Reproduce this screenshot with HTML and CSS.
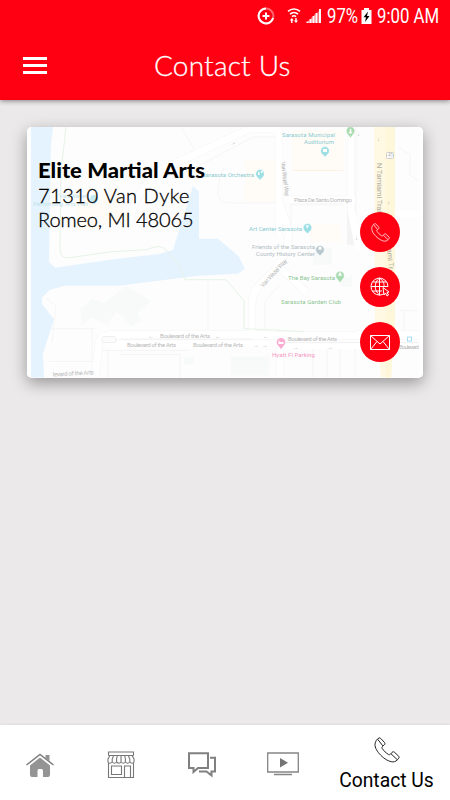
FILE: index.html
```
<!DOCTYPE html>
<html lang="en">
<head>
    <meta charset="UTF-8">
    <meta name="viewport" content="width=device-width, initial-scale=1.0">
    <title>Contact Us</title>
    <link rel="stylesheet" href="styles.css">
</head>
<body>
    <!-- shared icons -->
    <svg class="defs" width="0" height="0">
        <symbol id="phone" viewBox="0 0 26 26">
            <path d="M1 7.2C1.2 4.5 3 2 5 1C5.6.7 6.2.9 6.7 1.4L10.5 5.5C11.2 6.4 11 7.3 10.2 8L8.4 9.5C7.7 10.2 7.8 10.9 8.3 11.6C10 14 12 16 14.4 17.4C15.1 17.9 15.8 17.9 16.4 17.2L18 15.4C18.8 14.6 19.7 14.6 20.5 15.3L24.7 19.2C25.3 19.9 25.2 20.5 24.7 21.2C23.2 23.4 21.2 25 18.8 24.9C15 24.7 10.3 21.9 6.8 18.3C3.3 14.7.8 10.9 1 7.2ZM3.6 2.2L8.8 8.8M16.9 16.7L23.4 22.8"/>
        </symbol>
    </svg>

    <div class="status-bar">
        <svg class="ring" width="18" height="18" viewBox="0 0 18 18">
            <circle cx="9" cy="9" r="7.4" opacity=".4"/>
            <path d="M9 1.6A7.4 7.4 0 1 0 16.1 11M5.5 9h7M9 5.5v7"/>
        </svg>
        <svg class="wifi" width="14" height="18" viewBox="0 0 14 18">
            <path d="M1 4.3C4.5 1.2 9.5 1.2 13 4.3M3 7.2C5.3 5.1 8.7 5.1 11 7.2M5 9.6C6.2 8.6 7.8 8.6 9 9.6"/>
            <path class="fill" d="M4.8 11l2 2.5H5.5V16H4.1v-2.500H2.800zM9 16l-2-2.500h1.300V11h1.400v2.500H11z"/>
        </svg>
        <svg class="signal" width="16" height="16" viewBox="0 0 16 16">
            <path d="M1.500 15v-1.500M4.500 15v-4M7.500 15V8M10.500 15V5M14 15V1"/>
            <path opacity=".45" d="M3 15v-2.500M6 15v-5.500M9 15V6.500M12.500 15V3.500"/>
        </svg>
        <span class="percent">97%</span>
        <svg class="battery" width="11" height="16" viewBox="0 0 11 16">
            <path fill="#fff" d="M3 0h5v2h2.500v14H.5V2H3z"/>
            <path fill="#000" d="M7 3.500L2.500 9.300H5L4 14l4.500-6H6z"/>
        </svg>
        <span class="clock">9:00 AM</span>
    </div>

    <header class="header">
        <button class="menu" aria-label="Menu"><i></i><i></i><i></i></button>
        <h1>Contact Us</h1>
    </header>

    <main class="content">
        <section class="card">
            <svg class="map" viewBox="27 127 396 251" preserveAspectRatio="none">
                <rect x="27" y="127" width="396" height="251" fill="#fdfdfd"/>
                <!-- water -->
                <path fill="#e5f3ff" d="M31 127H53L51 145L49 262L55 268L110 260L160 254L173 250L193 186L199 192V239H218L231 250L239 257L245 269L238 274L199 276L150 282L120 286H65L50 290L42 298V304L54 320L43 354L44 378H31Z"/>
                <!-- blocks and buildings -->
                <path fill="#fffcf7" d="M245 160h32v43h-32zM292 130h52v41h-52zM77 202l40-15 10 35-50 9zM310 225h31v17h-31z"/>
                <path fill="#f8f9f9" d="M80 309l12-10 12 4 22-17 25 15-13 12 3 8-9 6-15-15-10 13-16-7-9 8zM341 279l11-4v12h-11zM184 358h10v7h-10zM231 357h38v19h-38zM313 248h19v17h-19z"/>
                <!-- small streets -->
                <g fill="none" stroke="#f5f5f5" stroke-width="1">
                    <path d="M181 127l18 30M180 176l73-39h24M224 168c-9 22-8 35 4 35h49M46 298l10 8-4 36M51 329h44M92 329v33H49M208 281v49M265 330v-28l14-16M101 351h88M108 351v27M291 248v-43h52M356 127v90M395 215h24M398 147l12 8v20l9 6M400 311h19M404 311v20M313 348v30M327 348v30M340 348v30M355 348v30M120 355h60v24"/>
                    <path stroke="#fbf0e2" d="M292 170.500h51"/>
                </g>
                <!-- roads -->
                <g fill="none" stroke="#f4f4f4" stroke-width="8">
                    <path d="M132 222q-3-13 10-31L157 172L249 129H279V235M351 127V245M288 200h67M355 335H419M101 336h318M95 378l4-34q1-9 12-9h164M252 334v-31q1-14 14-24q23-20 23-48l-10-30M280 348v30M280 268l27 25"/>
                </g>
                <g fill="none" stroke="#fff" stroke-width="7">
                    <path d="M132 222q-3-13 10-31L157 172L249 129H279V235M351 127V210l8 40M288 200h67M355 335H419M101 336h318M95 378l4-34q1-9 12-9h164M252 334v-31q1-14 14-24q23-20 23-48l-10-30M280 348v30M280 268l27 25"/>
                    <path d="M105 344.500H270M279 346h140M395 215h24"/>
                </g>
                <rect x="102" y="337" width="14" height="6" rx="2" fill="#fcfcfc" stroke="#eee"/>
                <path fill="none" stroke="#f1f1f1" d="M121 339.500h131M284 343h135"/>
                <path fill="none" stroke="#e5f3e7" d="M66 127l-5 45l-1 78q1 9 9 8l42-6 36-2q13-7 20 1l12 14 6 15h41l18 21v28l60 3"/>
                <!-- highway -->
                <path fill="#fff9e3" d="M374 127h21v195l-4 56h-10l-6-56z"/>
                <path fill="#fff7da" d="M385.500 127h9.500v195l-4 56h-5.500z"/>
                <rect x="386.500" y="152.500" width="7" height="6" rx="1" fill="#fff" stroke="#ccc"/>
                <text x="388" y="157.500" font-size="4.500" fill="#aaa">41</text>

                <g class="label teal">
                    <text x="282" y="137" textLength="53">Sarasota Municipal</text>
                    <text x="304" y="144" textLength="30">Auditorium</text>
                    <text x="202" y="177" textLength="52">Sarasota Orchestra</text>
                    <text x="249" y="231" textLength="53">Art Center Sarasota</text>
                    <text class="faded" x="59" y="198" textLength="28">Van Wezel</text>
                    <text class="faded" x="33" y="206" textLength="55">Performing Arts Hall</text>
                </g>
                <g class="label gray">
                    <text x="294" y="202" textLength="58">Plaza De Santo Domingo</text>
                    <g class="slate">
                        <text x="252" y="249" textLength="63">Friends of the Sarasota</text>
                        <text x="256" y="256" textLength="59">County History Center</text>
                    </g>
                    <text x="127" y="347" textLength="49">Boulevard of the Arts</text>
                    <text x="160" y="338" textLength="50">Boulevard of the Arts</text>
                    <text x="193" y="347" textLength="50">Boulevard of the Arts</text>
                    <text x="288" y="341" textLength="49">Boulevard of the Arts</text>
                    <text x="53" y="377" textLength="41" transform="rotate(-3 53 377)">levard of the Arts</text>
                    <text x="399" y="349" textLength="20">Boulevard</text>
                    <text textLength="35" transform="translate(281 162) rotate(83)">Van Wezel Way</text>
                    <text textLength="36" transform="translate(263 288) rotate(-47)">Van Wezel Way</text>
                    <text class="trail" textLength="51" transform="translate(377 163) rotate(90)">N Tamiami Trail</text>
                    <text class="trail" transform="translate(387 249) rotate(85)">ami Tr</text>
                    <text x="148" y="338">←</text>
                    <text x="215" y="338">←</text>
                    <text x="263" y="338">←</text>
                    <text x="253" y="347">→</text>
                    <text x="262" y="347">→</text>
                    <text x="293" y="349">→</text>
                    <text x="327" y="349">→</text>
                    <text x="377" y="141">↓</text>
                    <text x="357" y="136">↓</text>
                    <text x="387" y="205">↑</text>
                    <text x="355" y="240">↓</text>
                    <text transform="translate(231 146) rotate(-28)">→</text>
                </g>
                <g class="label green">
                    <text x="288" y="280" textLength="47">The Bay Sarasota</text>
                    <text x="281" y="304" textLength="60">Sarasota Garden Club</text>
                </g>
                <text class="label pink" x="272" y="357" textLength="43">Hyatt Fl Parking</text>

                <!-- pins -->
                <g stroke="#fff" stroke-width=".5">
                    <path fill="#9ddfe5" d="M260 180l-3-3a4.300 4.300 0 1 1 6 0zM325 157l-3-3a4.300 4.300 0 1 1 6 0zM307.500 234l-3-3a4.300 4.300 0 1 1 6 0z"/>
                    <path fill="#c4e9f2" d="M94 205l-3-3a4.300 4.300 0 1 1 6 0z"/>
                    <path fill="#a9dbb0" d="M350.500 138l-3-4a4.300 4.300 0 1 1 6 0zM340 283l-3-4a4.300 4.300 0 1 1 6 0z"/>
                    <path fill="#b8c8cf" d="M320 256l-3-3a4.300 4.300 0 1 1 6 0z"/>
                    <path fill="#f9abd0" d="M281 350l-3-4a4.500 4.500 0 1 1 6 0z"/>
                </g>
                <g fill="#fff">
                    <path d="M258 172h1.500v3H258zM261 171h1.500v2H261zM323 149h4v3h-4zM306 225l3 1-2 3zM349.800 129h1.500v3h1.500l-2.300 2-2.300-2h1.600zM340 272l2 4h-4zM318.500 247h3v3h-3zM278.500 341h1v1.500h4v2h-5z"/>
                </g>
                <rect x="407.500" y="337.500" width="4" height="4" fill="#fff" stroke="#a8def5"/>
                <path fill="#fff" d="M27 127h4v251h-4zM419.500 127h4v251h-4z"/>
            </svg>

            <div class="address">
                <strong>Elite Martial Arts</strong>
                <span class="street">71310 Van Dyke</span>
                <span class="city">Romeo, MI 48065</span>
            </div>

            <div class="actions">
                <a class="round" href="#" aria-label="Call">
                    <svg width="19" height="19"><use href="#phone"/></svg>
                </a>
                <a class="round" href="#" aria-label="Website">
                    <svg width="20" height="20" viewBox="0 0 20 20">
                        <path d="M13.500 17.100A8.500 8.500 0 1 1 18 9.500M9.500 1v17M1 9.500H18M2.500 5h14M2.500 14H12M9.500 1C3.800 5.500 3.800 13.500 9.500 18M9.500 1C13.500 3.800 14.300 6.800 14 10"/>
                        <path d="M13 10.500L14 18L15.500 16L17 19L18.500 18L17 15.500L19 15Z"/>
                    </svg>
                </a>
                <a class="round" href="#" aria-label="Email">
                    <svg width="20" height="15" viewBox="0 0 20 15">
                        <path d="M.5.500H19.500V14.500H.5ZM.5.500L10 9L19.500.500M.5 14.500L7 6.500M19.500 14.500L13 6.500"/>
                    </svg>
                </a>
            </div>
        </section>
    </main>

    <nav class="tabs">
        <a class="tab" href="#" aria-label="Home">
            <svg width="30" height="26" viewBox="0 0 30 26">
                <path fill="#949494" d="M5 13.500L15 5.500L25 13.500V23Q25 25 23 25H18V19Q18 17 16.500 17H14Q12.500 17 12.500 19V25H7Q5 25 5 23ZM20.500 3H24.500V9L20.500 6Z"/>
                <path fill="none" stroke="#808080" stroke-width="1.500" d="M1.500 13L15 2.500L28.500 13"/>
            </svg>
        </a>
        <a class="tab" href="#" aria-label="Store">
            <svg class="line" width="28" height="28" viewBox="0 0 28 28">
                <path d="M1.500 4.500V1H26.500V4.500M1.500 4.500H26.500M3 4.500L1 8V11Q3 13.500 5.200 11Q7.500 13.500 9.600 11Q12 13.500 14 11Q16.200 13.500 18.400 11Q20.600 13.500 22.800 11Q25 13.500 27 11V8L25 4.500M5.200 11V8L6.500 5M9.600 11V8L10.200 5M14 11V5M18.400 11V8L17.800 5M22.800 11V8L21.500 5M1.500 12V26.500H26.500V12M4.500 15H14.500V23.500H4.500ZM17.500 26V15H23.500V26"/>
            </svg>
        </a>
        <a class="tab" href="#" aria-label="Messages">
            <svg class="chat" width="30" height="28" viewBox="0 0 30 28">
                <path d="M2 2.200H21V17H11L6.500 21V17H2ZM23 6.800H28V20.500H24.500V24.500L19.500 20.500H12"/>
            </svg>
        </a>
        <a class="tab videos" href="#" aria-label="Videos">
            <svg width="32" height="24" viewBox="0 0 32 24">
                <path fill="none" stroke="#858585" stroke-width="1.300" d="M.7 1H31.300V20H.7ZM7 22.500H25"/>
                <path fill="#757575" d="M13 6V15.500L21 10.700Z"/>
            </svg>
        </a>
        <a class="tab active" href="#">
            <svg width="26" height="26"><use href="#phone"/></svg>
            <span>Contact Us</span>
        </a>
    </nav>
</body>
</html>
```
FILE: styles.css
```
* {
    box-sizing: border-box;
}

body {
    margin: 0;
    height: 800px;
    display: flex;
    flex-direction: column;
    background-color: #ebe9ea;
    font-family: Lato, sans-serif;
    overflow: hidden;
}

.defs {
    position: absolute;
}

a {
    color: inherit;
    text-decoration: none;
}

/* status bar */
.status-bar {
    height: 32px;
    flex: none;
    display: flex;
    align-items: center;
    justify-content: flex-end;
    padding-right: 12px;
    background-color: #ff0012;
    color: #fff;
    font-family: Roboto, sans-serif;
    font-size: 19.5px;
    line-height: 32px;
    position: relative;
    z-index: 2;
}

.status-bar svg {
    flex: none;
    fill: none;
    stroke: #fff;
    stroke-width: 1.6;
}

.status-bar .ring {
    stroke-width: 2;
    margin-right: 12px;
}

.status-bar .wifi {
    margin-right: 5px;
}

.status-bar .wifi .fill {
    fill: #fff;
    stroke: none;
}

.status-bar .signal {
    stroke-width: 2;
    margin-right: 5px;
}

.status-bar .battery {
    stroke: none;
    margin: 0 5px 0 4px;
}

.percent,
.clock {
    display: block;
    padding-top: 1px;
    white-space: nowrap;
    transform: scaleX(0.86);
    transform-origin: left;
}

.percent {
    width: 30px;
}

.clock {
    width: 61px;
}

/* header */
.header {
    height: 68px;
    flex: none;
    display: flex;
    align-items: center;
    padding: 0 23px 2px;
    background-color: #ff0012;
    color: #fff;
    box-shadow: 0 1px 5px rgba(0, 0, 0, 0.45);
    position: relative;
    z-index: 1;
}

.menu {
    display: flex;
    flex-direction: column;
    gap: 4px;
    width: 24px;
    padding: 0;
    border: none;
    background: none;
}

.menu i {
    height: 3px;
    background-color: #fff;
}

.header h1 {
    margin: 0 0 0 107px;
    font-size: 28px;
    font-weight: 300;
    letter-spacing: 0.2px;
    white-space: nowrap;
    -webkit-text-stroke: 0.3px #fff;
}

/* card */
.content {
    flex: 1;
    padding: 27px 27px 0;
}

.card {
    position: relative;
    display: flex;
    justify-content: space-between;
    height: 250.5px;
    border-radius: 5px;
    background-color: #fff;
    box-shadow: 0 5px 16px rgba(0, 0, 0, 0.36);
}

.map {
    position: absolute;
    top: 0;
    left: 0;
    width: 100%;
    height: 100%;
    border-radius: 5px;
}

.label,
.map text {
    font-family: Roboto, sans-serif;
}

.label {
    font-size: 6px;
}

.teal { fill: #8acbd1; }
.gray { fill: #b8b8b8; }
.slate { fill: #b0bcc2; }
.green { fill: #8bc593; }
.pink { fill: #f598c4; }
.faded { fill: #bfe3ea; }

.label .trail {
    font-size: 7.5px;
    fill: #b0aca0;
}

.address {
    position: relative;
    display: flex;
    flex-direction: column;
    align-items: flex-start;
    padding: 31px 0 0 11px;
    color: #000;
    font-size: 20px;
    line-height: 24.5px;
    white-space: nowrap;
}

.address strong {
    font-weight: 900;
    transform: scaleX(1.1);
    transform-origin: left;
}

.address .street,
.address .city {
    font-weight: 300;
    -webkit-text-stroke: 0.3px #000;
}

.address .street {
    letter-spacing: 0.5px;
}

.address .city {
    letter-spacing: -0.1px;
}

.actions {
    position: relative;
    display: flex;
    flex-direction: column;
    gap: 15px;
    padding: 85.4px 23px 0 0;
}

.round {
    display: flex;
    align-items: center;
    justify-content: center;
    width: 40px;
    height: 40px;
    border-radius: 50%;
    background-color: #ff0012;
}

.round svg {
    fill: none;
    stroke: #fff;
    stroke-width: 1;
}

/* bottom tabs */
.tabs {
    height: 75px;
    flex: none;
    display: grid;
    grid-template-columns: 80px 81px 81px 81px 127px;
    background-color: #fff;
    box-shadow: 0 -1px 2px rgba(0, 0, 0, 0.05);
}

.tab {
    display: flex;
    align-items: center;
    justify-content: center;
    padding-top: 4px;
}

.tab .line {
    fill: none;
    stroke: #777;
    stroke-width: 1.1;
}

.tab .chat {
    fill: none;
    stroke: #808080;
    stroke-width: 2;
}

.tab.videos {
    padding-top: 2px;
}

.tab.active {
    flex-direction: column;
    justify-content: flex-start;
    padding-top: 12px;
    color: #000;
    font-family: Roboto, sans-serif;
    font-size: 19.3px;
    line-height: 24px;
}

.tab.active svg {
    fill: none;
    stroke: #222;
    stroke-width: 1;
    margin-bottom: 6px;
}
```
